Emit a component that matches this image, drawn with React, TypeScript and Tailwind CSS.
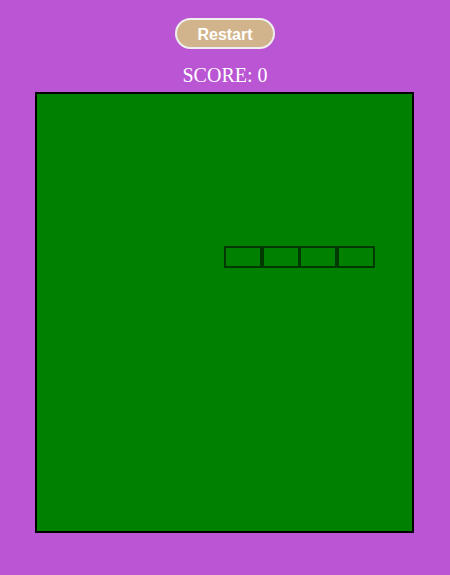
const snake = [0, 1, 2, 3];

export default function App() {
  return (
    <div className="min-h-[575px] w-[450px] bg-[#ba55d3] flex flex-col items-center pt-[18px]">
      <button className="w-[100px] h-[31px] pt-[3px] rounded-full bg-[#d2b48c] border-2 border-[#eeeeee] text-white font-bold text-[16px] font-['Liberation_Sans',Arial,sans-serif] leading-none">
        Restart
      </button>
      <div className="mt-[15px] text-white text-[20px] leading-[23px] font-['Liberation_Serif','Times_New_Roman',serif]">
        SCORE: 0
      </div>
      <div className="mt-[5px] ml-[-1px] w-[379px] h-[441px] border-2 border-black bg-[#008000] relative">
        {snake.map((i) => (
          <div
            key={i}
            className="absolute top-[152px] h-[22px] w-[38px] border-2 border-[#003a00] bg-[#008000]"
            style={{ left: 187 + i * 37.5 }}
          />
        ))}
      </div>
    </div>
  );
}
